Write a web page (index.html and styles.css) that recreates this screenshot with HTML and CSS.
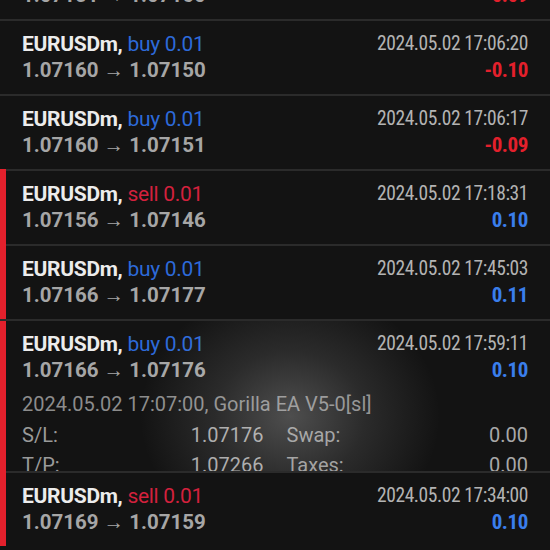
FILE: index.html
```html
<!DOCTYPE html>
<html lang="en">
<head>
    <meta charset="UTF-8">
    <meta name="viewport" content="width=device-width, initial-scale=1.0">
    <title>History</title>
    <link rel="stylesheet" href="styles.css">
</head>
<body>
    <div class="deals">
        <div class="deal">
            <div class="left">
                <div class="title"><span class="sym">EURUSDm,</span> <span class="buy">buy 0.01</span></div>
                <div class="prices">1.07151 → 1.07160</div>
            </div>
            <div class="right">
                <div class="time">2024.05.02 17:05:51</div>
                <div class="profit loss">-0.09</div>
            </div>
        </div>

        <div class="deal">
            <div class="left">
                <div class="title"><span class="sym">EURUSDm,</span> <span class="buy">buy 0.01</span></div>
                <div class="prices">1.07160 → 1.07150</div>
            </div>
            <div class="right">
                <div class="time">2024.05.02 17:06:20</div>
                <div class="profit loss">-0.10</div>
            </div>
        </div>

        <div class="deal">
            <div class="left">
                <div class="title"><span class="sym">EURUSDm,</span> <span class="buy">buy 0.01</span></div>
                <div class="prices">1.07160 → 1.07151</div>
            </div>
            <div class="right">
                <div class="time">2024.05.02 17:06:17</div>
                <div class="profit loss">-0.09</div>
            </div>
        </div>

        <div class="deal marked">
            <div class="left">
                <div class="title"><span class="sym">EURUSDm,</span> <span class="sell">sell 0.01</span></div>
                <div class="prices">1.07156 → 1.07146</div>
            </div>
            <div class="right">
                <div class="time">2024.05.02 17:18:31</div>
                <div class="profit gain">0.10</div>
            </div>
        </div>

        <div class="deal marked">
            <div class="left">
                <div class="title"><span class="sym">EURUSDm,</span> <span class="buy">buy 0.01</span></div>
                <div class="prices">1.07166 → 1.07177</div>
            </div>
            <div class="right">
                <div class="time">2024.05.02 17:45:03</div>
                <div class="profit gain">0.11</div>
            </div>
        </div>

        <div class="deal marked open">
            <div class="head">
                <div class="left">
                    <div class="title"><span class="sym">EURUSDm,</span> <span class="buy">buy 0.01</span></div>
                    <div class="prices">1.07166 → 1.07176</div>
                </div>
                <div class="right">
                    <div class="time">2024.05.02 17:59:11</div>
                    <div class="profit gain">0.10</div>
                </div>
            </div>
            <div class="details">
                <div class="opened">2024.05.02 17:07:00, Gorilla EA V5-0[sl]</div>
                <div class="grid">
                    <div class="pair"><span>S/L:</span><span class="val">1.07176</span></div>
                    <div class="pair"><span>Swap:</span><span class="val">0.00</span></div>
                    <div class="pair"><span>T/P:</span><span class="val">1.07266</span></div>
                    <div class="pair"><span>Taxes:</span><span class="val">0.00</span></div>
                </div>
            </div>
            <div class="glare"></div>
        </div>

        <div class="deal marked">
            <div class="left">
                <div class="title"><span class="sym">EURUSDm,</span> <span class="sell">sell 0.01</span></div>
                <div class="prices">1.07169 → 1.07159</div>
            </div>
            <div class="right">
                <div class="time">2024.05.02 17:34:00</div>
                <div class="profit gain">0.10</div>
            </div>
        </div>
    </div>
</body>
</html>
```

FILE: styles.css
```css
body {
    margin: 0;
    background-color: #131313;
    font-family: Roboto, "Liberation Sans", sans-serif;
    overflow: hidden;
}
.deals {
    margin-top: -56px;
}
.deal {
    position: relative;
    display: flex;
    justify-content: space-between;
    height: 75px;
    box-sizing: border-box;
    padding: 10px 22px 0 22px;
    border-top: 2px solid #2b2b2b;
}
.deal.marked::before {
    content: "";
    position: absolute;
    left: 0;
    top: -2px;
    bottom: 0;
    width: 6px;
    background-color: #e3202c;
}
.deal.open {
    display: block;
    height: 152px;
    overflow: hidden;
}
.head {
    display: flex;
    justify-content: space-between;
}
.title {
    font-size: 21px;
    line-height: 26px;
    color: #ececec;
    letter-spacing: -0.3px;
}
.sym {
    font-weight: bold;
}
.buy {
    color: #2d6ad9;
}
.sell {
    color: #d3213d;
}
.prices {
    font-size: 20.5px;
    line-height: 26px;
    font-weight: bold;
    color: #a6a6a6;
}
.right {
    text-align: right;
    font-family: "Roboto Condensed", Roboto, sans-serif;
}
.time {
    font-size: 19.5px;
    line-height: 26px;
    letter-spacing: -0.4px;
    color: #b3b3b3;
}
.profit {
    font-size: 21px;
    line-height: 26px;
    font-weight: bold;
    letter-spacing: -0.4px;
}
.loss {
    color: #e3202c;
}
.gain {
    color: #3a7eec;
}
.details {
    margin-top: 5px;
    color: #8c8c8c;
    font-size: 20px;
}
.opened {
    line-height: 32px;
}
.grid {
    display: grid;
    grid-template-columns: 1fr 1fr;
    column-gap: 23px;
    line-height: 30px;
    color: #9a9a9a;
}
.pair {
    display: flex;
    justify-content: space-between;
}
.pair .val {
    color: #a8a8a8;
}
/* camera glare over the opened deal */
.glare {
    position: absolute;
    left: 0;
    top: 0;
    right: 0;
    bottom: 0;
    background: radial-gradient(ellipse 150px 130px at 290px 95px, rgba(215, 215, 215, 0.3), rgba(215, 215, 215, 0.12) 50%, rgba(215, 215, 215, 0) 100%);
    pointer-events: none;
}
```
